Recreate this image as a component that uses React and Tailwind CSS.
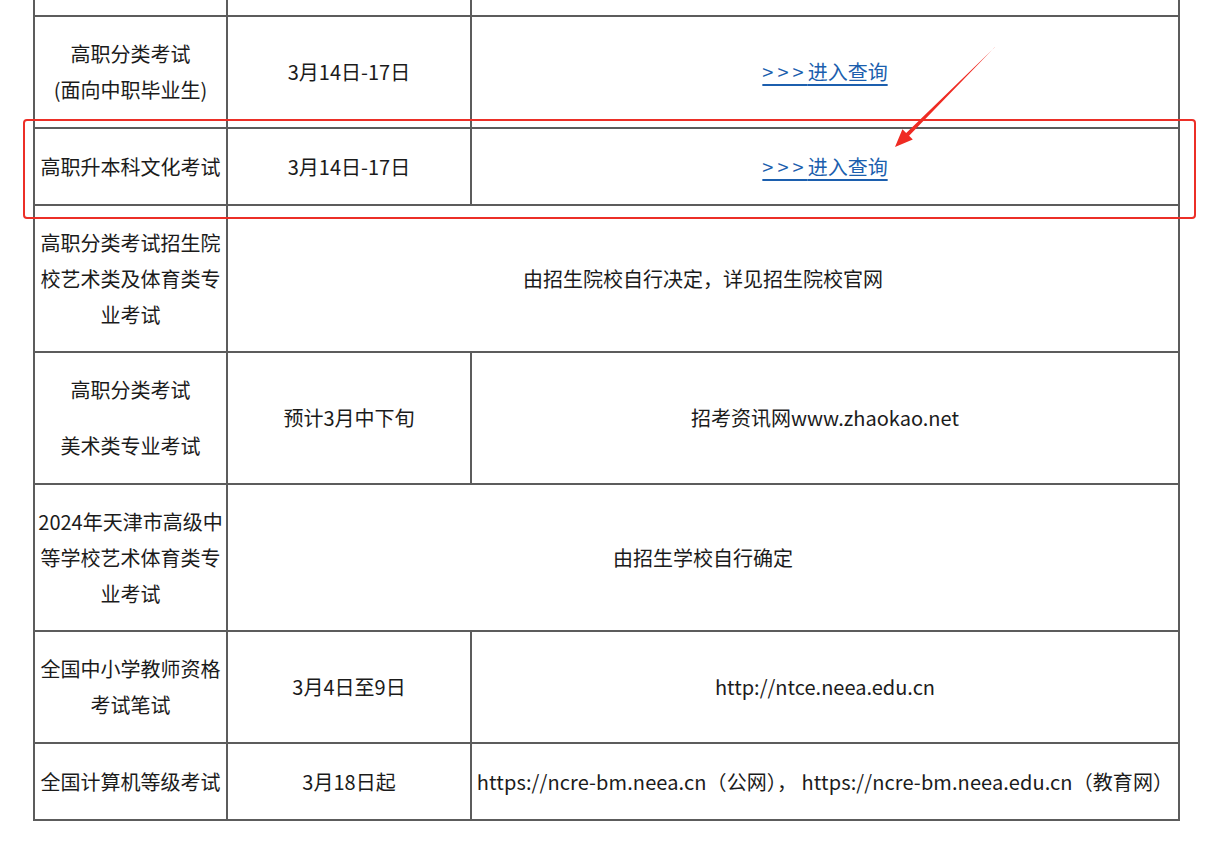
import React from 'react';

const cell = 'border-2 border-[#5c5c5c] text-center align-middle px-[2px] py-0';

const QueryLink = () => (
  <a href="#" className="text-[#1c5fae] underline underline-offset-[4px] decoration-[1.5px]">
    <span className="tracking-[4px]">&gt;&gt;&gt;</span>进入查询
  </a>
);

const rows = [
  { h: 'h-[112px]', name: <>高职分类考试<br />(面向中职毕业生)</>, date: '3月14日-17日', site: <QueryLink /> },
  { h: 'h-[77px]', name: '高职升本科文化考试', date: '3月14日-17日', site: <QueryLink /> },
  { h: 'h-[147px]', name: '高职分类考试招生院校艺术类及体育类专业考试', span: '由招生院校自行决定，详见招生院校官网' },
  {
    h: 'h-[132px]',
    name: (
      <div className="flex flex-col gap-[20px]">
        <p>高职分类考试</p>
        <p>美术类专业考试</p>
      </div>
    ),
    date: '预计3月中下旬',
    site: '招考资讯网www.zhaokao.net',
  },
  { h: 'h-[147px]', name: '2024年天津市高级中等学校艺术体育类专业考试', span: '由招生学校自行确定' },
  { h: 'h-[112px]', name: '全国中小学教师资格考试笔试', date: '3月4日至9日', site: 'http://ntce.neea.edu.cn' },
  {
    h: 'h-[77px]',
    name: '全国计算机等级考试',
    date: '3月18日起',
    site: (
      <span className="tracking-[0.1px]">
        https://ncre-bm.neea.cn（公网）， https://ncre-bm.neea.edu.cn（教育网）
      </span>
    ),
  },
];

const Arrow = () => (
  <svg className="absolute left-0 top-0 pointer-events-none" width="1219" height="845">
    <polygon
      points="995.4,46.6 994.6,47.4 906.2,132.9 902.4,129.2 895,147 912.8,139.6 909.1,135.8"
      fill="#ef2b23"
    />
  </svg>
);

export default function App() {
  return (
    <div
      className="relative w-[1219px] h-[845px] overflow-hidden bg-white text-[20px] leading-[36px] text-[#1b1b1b]"
      style={{ fontFamily: '"Noto Sans CJK SC", "Noto Sans", sans-serif' }}
    >
      <div className="pl-[33px]">
        <table className="w-[1145px] table-fixed border-collapse">
          <colgroup>
            <col className="w-[193px]" />
            <col className="w-[244px]" />
            <col className="w-[708px]" />
          </colgroup>
          <tbody>
            <tr className="h-[16px]">
              <td className={`${cell} border-t-0`}></td>
              <td className={`${cell} border-t-0`}></td>
              <td className={`${cell} border-t-0`}></td>
            </tr>
            {rows.map((r, i) => (
              <tr key={i} className={r.h}>
                <td className={cell}>{r.name}</td>
                {r.span ? (
                  <td className={cell} colSpan={2}>{r.span}</td>
                ) : (
                  <>
                    <td className={cell}>{r.date}</td>
                    <td className={`${cell} whitespace-nowrap`}>{r.site}</td>
                  </>
                )}
              </tr>
            ))}
          </tbody>
        </table>
      </div>

      {/* annotation overlay */}
      <div className="absolute left-[23px] top-[119px] w-[1173px] h-[100px] border-[2.5px] border-[#ec2f27] rounded-[4px] pointer-events-none" />
      <Arrow />
    </div>
  );
}
